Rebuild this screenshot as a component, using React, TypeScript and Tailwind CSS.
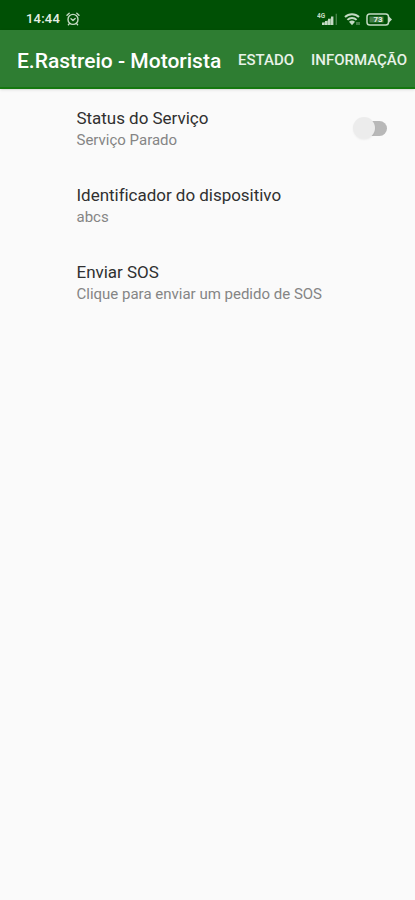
import React from 'react';

const StatusBar: React.FC = () => (
    <div className="flex h-[30px] items-center justify-between bg-[#005005] pt-[8px] pr-[22px] pl-[26px] text-[#e4efe4]">
        <div className="flex items-center gap-[6px]">
            <span className="text-[13px] leading-4 font-medium tracking-[0.2px]">14:44</span>
            {/* Alarm */}
            <svg width="14" height="14" viewBox="0 0 14 14" fill="none" stroke="#c3dac3" strokeWidth="1.4" strokeLinecap="round" strokeLinejoin="round">
                <circle cx="7" cy="7.4" r="5" />
                <path d="m5 6.8 2 1.8 2.2-2M1 3.2 3.2 1.2M13 3.2 10.8 1.2M3.4 11.6l-1 1.2M10.6 11.6l1 1.2" />
            </svg>
        </div>
        <div className="flex items-center">
            {/* Mobile signal */}
            <svg className="mr-[6px]" width="21" height="14" viewBox="0 0 21 14" fill="#c3dac3">
                <text x="0" y="6" fontSize="6.5" fontWeight="700">4G</text>
                <path d="M5 10.6h2.6v2.4H5zM8 9h2.6v4H8zM11 6.8h2.6V13H11zM14 4.4h2.4V13H14z" />
                <path d="M5 11.5 16 5v8H5z" opacity=".4" />
                <path d="M18.6 1.8H20V13h-1.4z" opacity=".35" />
            </svg>
            {/* Wi-Fi */}
            <svg className="mr-[5px]" width="17" height="14" viewBox="0 0 17 14" fill="none" stroke="#c3dac3" strokeWidth="2">
                <path d="M1 5a10 10 0 0 1 14 0M3.4 7.9a6.5 6.5 0 0 1 9.2 0" />
                <path d="M5 9.8a4.4 4.4 0 0 1 6 0L8 13.2z" fill="#c3dac3" stroke="none" />
                <path d="M13 10v3M15 10v3" strokeWidth="1" opacity=".7" />
            </svg>
            {/* Battery */}
            <svg width="27" height="13" viewBox="0 0 27 13" fill="none" stroke="#c3dac3" strokeWidth="1.5">
                <rect x="1" y="1" width="21.5" height="11" rx="2.8" />
                <path d="M23 3.6 26 6.5 23 9.4z" fill="#c3dac3" stroke="none" />
                <path d="M3.5 3.5h14v6h-14z" fill="#c3dac3" stroke="none" opacity=".35" />
                <text x="7.4" y="9.4" fontSize="8" fontWeight="700" fill="#e4efe4" stroke="none">73</text>
            </svg>
        </div>
    </div>
);

const Preference: React.FC<{ title: string; summary: string; children?: React.ReactNode }> = ({ title, summary, children }) => (
    <div className="flex h-[77px] items-start justify-between pt-[18px] pr-[28px] pl-[76.5px]">
        <div>
            <p className="text-[17px] leading-[22px] tracking-[-0.03px] text-[#303030]">{title}</p>
            <p className="text-[15px] leading-[22px] text-[#858585]">{summary}</p>
        </div>
        {children}
    </div>
);

export default function App() {
    return (
        <div className="min-h-screen bg-[#fafafa] font-['Roboto',sans-serif]">
            <StatusBar />
            <header className="flex h-[59px] items-center border-b-2 border-[#14780f] bg-[#2e7d32] pt-[3px] pl-[17px] text-white shadow-sm">
                <h1 className="w-[221px] pt-[3px] text-[21px] font-medium whitespace-nowrap">E.Rastreio - Motorista</h1>
                <button className="w-[73px] text-left text-[15px] font-medium text-[#e8f2e8]">ESTADO</button>
                <button className="text-[15px] font-medium text-[#e8f2e8]">INFORMAÇÃO</button>
            </header>
            <main>
                <Preference title="Status do Serviço" summary="Serviço Parado">
                    <div className="mt-[10px] flex h-[22px] w-[34px] items-center">
                        <div className="z-10 size-[22px] shrink-0 rounded-full bg-[#ececec] shadow-xs" />
                        <div className="-ml-[8px] h-[15px] w-[20px] shrink-0 rounded-r-full bg-[#b8b8b8]" />
                    </div>
                </Preference>
                <Preference title="Identificador do dispositivo" summary="abcs" />
                <Preference title="Enviar SOS" summary="Clique para enviar um pedido de SOS" />
            </main>
        </div>
    );
}
